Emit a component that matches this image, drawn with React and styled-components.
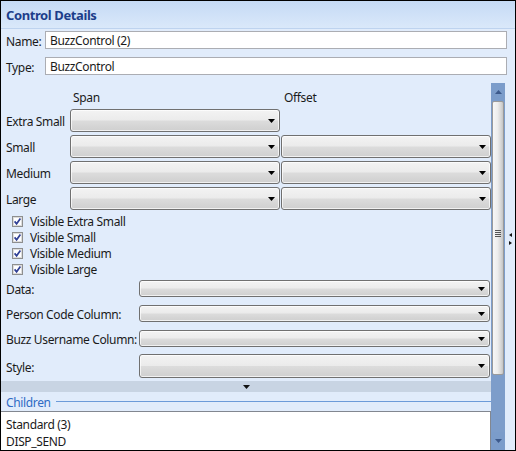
import React from "react";
import styled, { createGlobalStyle } from "styled-components";

const GlobalStyle = createGlobalStyle`
  body {
    margin: 0;
    background: #ffffff;
  }
  * {
    box-sizing: border-box;
  }
`;

const sizes = ["Extra Small", "Small", "Medium", "Large"];
const visibles = ["Visible Extra Small", "Visible Small", "Visible Medium", "Visible Large"];
const props = [
  { label: "Data:" },
  { label: "Person Code Column:" },
  { label: "Buzz Username Column:" },
  { label: "Style:", tall: true },
];
const children = ["Standard (3)", "DISP_SEND"];

function ArrowDown({ color = "#000" }) {
  return (
    <svg width="7" height="4" viewBox="0 0 7 4">
      <path d="M0 0 H7 L3.5 4 Z" fill={color} />
    </svg>
  );
}

function CheckIcon() {
  return (
    <svg width="11" height="11" viewBox="0 0 11 11">
      <rect x="0.5" y="0.5" width="10" height="10" fill="#f4f4f4" stroke="#8e8f8f" />
      <rect x="1.5" y="1.5" width="8" height="8" fill="#ffffff" stroke="#dcdcdc" />
      <path d="M2.6 5.4 L4.6 7.8 L8.4 2.6" fill="none" stroke="#2f3f95" strokeWidth="1.7" />
    </svg>
  );
}

function Combo({ tall }) {
  return (
    <ComboBox $tall={tall}>
      <ArrowDown />
    </ComboBox>
  );
}

export default function App() {
  return (
    <>
      <GlobalStyle />
      <Panel>
        <Header>
          <Title>Control Details</Title>
        </Header>
        <Fields>
          <FieldLabel>Name:</FieldLabel>
          <TextBox>BuzzControl (2)</TextBox>
          <FieldLabel>Type:</FieldLabel>
          <TextBox>BuzzControl</TextBox>
        </Fields>
        <ScrollRegion>
          <Content>
            <ColumnHeads>
              <span />
              <ColumnHead>Span</ColumnHead>
              <ColumnHead>Offset</ColumnHead>
            </ColumnHeads>
            <SizeGrid>
              {sizes.map((s, i) => (
                <React.Fragment key={s}>
                  <RowLabel>{s}</RowLabel>
                  <Combo />
                  {i > 0 ? <Combo /> : <span />}
                </React.Fragment>
              ))}
            </SizeGrid>
            <CheckList>
              {visibles.map((v) => (
                <CheckRow key={v}>
                  <CheckIcon />
                  <span>{v}</span>
                </CheckRow>
              ))}
            </CheckList>
            <PropGrid>
              {props.map((p) => (
                <PropRow key={p.label} $tall={p.tall}>
                  <RowLabel>{p.label}</RowLabel>
                  <Combo tall={p.tall} />
                </PropRow>
              ))}
            </PropGrid>
            <Expander>
              <ArrowDown color="#111" />
            </Expander>
            <GroupHead>
              <GroupTitle>Children</GroupTitle>
              <GroupLine />
            </GroupHead>
            <ChildList>
              {children.map((c) => (
                <ChildItem key={c}>{c}</ChildItem>
              ))}
            </ChildList>
          </Content>
          <ScrollBar>
            <ScrollButton>
              <svg width="7" height="4" viewBox="0 0 7 4">
                <path d="M0 4 H7 L3.5 0 Z" fill="#3d5a8c" />
              </svg>
            </ScrollButton>
            <Thumb>
              <Grip>
                <i />
                <i />
                <i />
                <i />
              </Grip>
            </Thumb>
            <Track />
            <ScrollButton>
              <ArrowDown color="#3d5a8c" />
            </ScrollButton>
          </ScrollBar>
          <Splitter>
            <svg width="4" height="12" viewBox="0 0 4 12">
              <path d="M3 0 V4 L0 2 Z" fill="#111" />
              <path d="M0 8 V12 L3 10 Z" fill="#111" />
            </svg>
          </Splitter>
        </ScrollRegion>
      </Panel>
    </>
  );
}

const Panel = styled.div`
  width: 516px;
  height: 451px;
  border: 1px solid #000;
  background: #e1ecfb;
  display: flex;
  flex-direction: column;
  overflow: hidden;
  font-family: "Noto Sans", "Open Sans", sans-serif;
  font-size: 12px;
  letter-spacing: -0.35px;
  color: #1a1a1a;
`;

const Header = styled.div`
  height: 28px;
  flex: none;
  display: flex;
  align-items: center;
  padding-left: 5px;
  background: linear-gradient(#c5daf5, #dae8fa);
  border-bottom: 1px solid #bed3ef;
`;

const Title = styled.div`
  font-weight: bold;
  font-size: 13px;
  color: #1c3d8a;
  letter-spacing: -0.4px;
`;

const Fields = styled.div`
  display: grid;
  grid-template-columns: 44px 462px;
  grid-auto-rows: 18px;
  row-gap: 8px;
  padding-top: 2px;
  flex: none;
`;

const FieldLabel = styled.div`
  padding: 2px 0 0 5px;
  display: flex;
  align-items: center;
`;

const TextBox = styled.div`
  background: #fff;
  border: 1px solid #abadb3;
  padding: 1px 4px 0;
  display: flex;
  align-items: center;
`;

const ScrollRegion = styled.div`
  margin-top: 8px;
  flex: 1;
  min-height: 0;
  display: flex;
`;

const Content = styled.div`
  width: 490px;
  display: flex;
  flex-direction: column;
  overflow: hidden;
`;

const ColumnHeads = styled.div`
  display: grid;
  grid-template-columns: 68px 211px 211px;
  height: 18px;
  margin-top: 6px;
`;

const ColumnHead = styled.div`
  padding-left: 4px;
  display: flex;
  align-items: center;
`;

const SizeGrid = styled.div`
  margin-top: 3px;
  display: grid;
  grid-template-columns: 68px 210px 210px;
  grid-auto-rows: 23px;
  column-gap: 1px;
  row-gap: 3px;
`;

const RowLabel = styled.div`
  height: 100%;
  padding: 2px 0 0 5px;
  display: flex;
  align-items: center;
  white-space: nowrap;
`;

const ComboBox = styled.div`
  height: ${(p) => (p.$tall ? "24px" : "100%")};
  align-self: center;
  border: 1px solid #707070;
  border-radius: 3px;
  background: linear-gradient(#f3f3f3 0%, #ebebeb 48%, #dcdcdc 52%, #cfcfcf 100%);
  box-shadow: inset 0 0 0 1px rgba(255, 255, 255, 0.7);
  display: flex;
  align-items: center;
  justify-content: flex-end;
  padding-right: 4px;
`;

const CheckList = styled.div`
  margin-top: 3px;
  padding-left: 11px;
  display: flex;
  flex-direction: column;
`;

const CheckRow = styled.div`
  height: 16px;
  display: flex;
  align-items: center;
  gap: 7px;
`;

const PropGrid = styled.div`
  margin-top: -1px;
  display: flex;
  flex-direction: column;
`;

const PropRow = styled.div`
  height: ${(p) => (p.$tall ? "30px" : "25px")};
  display: grid;
  grid-template-columns: 138px 351px;
  grid-template-rows: 100%;
  align-items: center;

  & > div:last-child {
    height: ${(p) => (p.$tall ? "24px" : "17px")};
  }
`;

const Expander = styled.div`
  height: 12px;
  background: #c8d4e3;
  display: flex;
  align-items: center;
  justify-content: center;
`;

const GroupHead = styled.div`
  height: 20px;
  display: flex;
  align-items: center;
  padding-left: 5px;
  gap: 5px;
`;

const GroupTitle = styled.div`
  color: #2f6bc4;
  padding-top: 2px;
`;

const GroupLine = styled.div`
  flex: 1;
  height: 1px;
  background: #6c9bd9;
`;

const ChildList = styled.div`
  flex: 1;
  background: #fff;
  border-top: 1px solid #828790;
  border-right: 1px solid #828790;
  padding-top: 4px;
`;

const ChildItem = styled.div`
  height: 17px;
  padding-left: 5px;
  display: flex;
  align-items: center;
`;

const ScrollBar = styled.div`
  width: 14px;
  display: flex;
  flex-direction: column;
  background: #7d9dca;
`;

const ScrollButton = styled.div`
  height: 18px;
  flex: none;
  display: flex;
  align-items: center;
  justify-content: center;
  background: #7b9cca;
`;

const Thumb = styled.div`
  height: 274px;
  flex: none;
  margin: 0 1px;
  border: 1px solid #9a9a9a;
  border-radius: 2px;
  background: linear-gradient(90deg, #f7f7f7 0%, #ededed 45%, #d6d6d6 80%, #c4c4c4 100%);
  display: flex;
  align-items: center;
  justify-content: center;
`;

const Grip = styled.div`
  display: flex;
  flex-direction: column;
  gap: 1px;
  margin-top: -10px;

  i {
    display: block;
    width: 6px;
    height: 1px;
    background: #555;
  }
`;

const Track = styled.div`
  flex: 1;
`;

const Splitter = styled.div`
  width: 10px;
  display: flex;
  justify-content: center;
  padding-top: 150px;
  padding-left: 1px;
`;
